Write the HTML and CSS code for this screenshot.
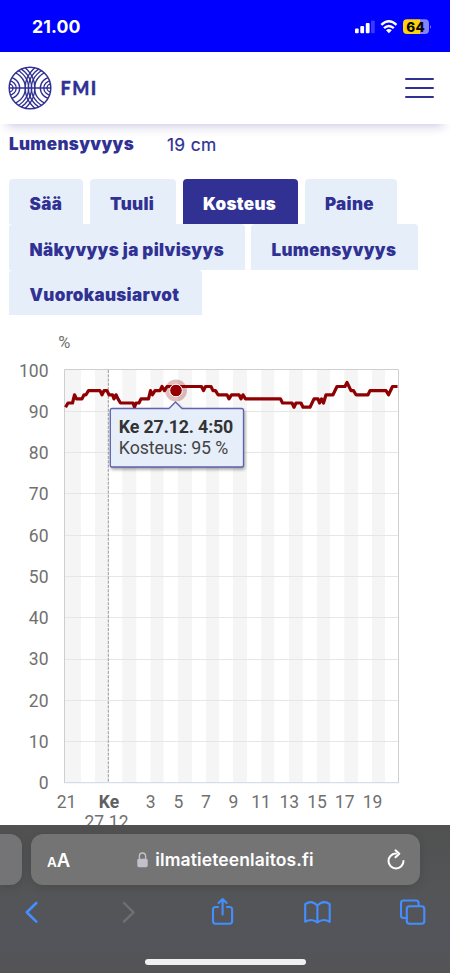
FILE: index.html
```html
<!DOCTYPE html>
<html lang="fi">
<head>
<meta charset="utf-8">
<meta name="viewport" content="width=device-width, initial-scale=1">
<title>Ilmatieteen laitos</title>
<link rel="stylesheet" href="styles.css">
</head>
<body>
<div class="phone">
  <div class="status">
    <span class="clock">21.00</span>
    <svg class="status-icons" width="76" height="18" viewBox="354 18 76 18">
      <g fill="#fff"><rect x="355" y="28.5" width="3.7" height="4.7" rx="1"/><rect x="360.3" y="26" width="3.8" height="7.2" rx="1"/><rect x="365.8" y="23" width="3.8" height="10.2" rx="1"/><rect x="371" y="20.5" width="3.8" height="12.7" rx="1" opacity=".22"/></g>
      <g fill="none" stroke="#fff" stroke-width="2.4"><path d="M381.3 24.8Q388.9 17.8 396.5 24.8"/><path d="M384 28.2Q388.9 23.8 393.8 28.2"/></g>
      <path d="M386 30.3Q388.9 27.8 391.8 30.3L388.9 33.3Z" fill="#fff"/>
      <path d="M407 19.3H420V34H407a4 4 0 0 1-4-4V23.3a4 4 0 0 1 4-4Z" fill="#ffd20a"/>
      <path d="M420 19.3h5a4 4 0 0 1 4 4V30a4 4 0 0 1-4 4h-5Z" fill="#8583fb"/>
      <path d="M430 24.7q1.8 2 0 4.2Z" fill="#8583fb"/>
      <text x="406.2" y="31.7" class="battery" textLength="18.5">64</text>
    </svg>
  </div>
  <header class="header">
    <a class="brand">
      <svg width="44" height="44" viewBox="0 0 44 44">
        <defs><clipPath id="disc"><circle cx="22" cy="22" r="21"/></clipPath></defs>
        <g fill="none" stroke="#303193" stroke-width="1.35">
          <g clip-path="url(#disc)">
            <circle cx="1" cy="22" r="4"/><circle cx="1" cy="22" r="7.2"/><circle cx="1" cy="22" r="10.7"/><circle cx="1" cy="22" r="16.4"/><circle cx="1" cy="22" r="19.6"/><circle cx="1" cy="22" r="22.6"/><circle cx="1" cy="22" r="25.8"/>
            <circle cx="43" cy="22" r="4"/><circle cx="43" cy="22" r="7.2"/><circle cx="43" cy="22" r="10.7"/><circle cx="43" cy="22" r="16.4"/><circle cx="43" cy="22" r="19.6"/><circle cx="43" cy="22" r="22.6"/><circle cx="43" cy="22" r="25.8"/>
            <path d="M1 22H43"/>
          </g>
          <circle cx="22" cy="22" r="20.8" stroke-width="1.5"/>
        </g>
      </svg>
      <span class="brand-name">FMI</span>
    </a>
    <div class="burger"><i></i><i></i><i></i></div>
  </header>
  <main class="content">
    <div class="reading"><b>Lumensyvyys</b><span>19 cm</span></div>
    <nav class="tabs">
      <a class="tab t-saa">Sää</a><a class="tab t-tuuli">Tuuli</a><a class="tab t-kosteus active">Kosteus</a><a class="tab t-paine">Paine</a>
      <a class="tab t-nakyvyys">Näkyvyys ja pilvisyys</a><a class="tab t-lumi">Lumensyvyys</a>
      <a class="tab t-vuorokausi">Vuorokausiarvot</a>
    </nav>
    <svg class="chart" width="450" height="509" viewBox="0 316 450 509">
      <path class="stripes" d="M65 370h16v412.500h-16zM95 370h14v412.500h-14zM122.300 370h14v412.500h-14zM150.500 370h13v412.500h-13zM178 370h14v412.500h-14zM206 370h13v412.500h-13zM233 370h14v412.500h-14zM261.300 370h13v412.500h-13zM289 370h13.700v412.500h-13.700zM317 370h13v412.500h-13zM344.300 370h13.700v412.500h-13.700zM372 370h13v412.500h-13z"/>
      <path class="grid" d="M65 411.500H398M65 452.500H398M65 493.500H398M65 535.500H398M65 576.500H398M65 617.500H398M65 659.500H398M65 700.500H398M65 741.500H398"/>
      <path class="frame" d="M64.500 783V369.500H398.500V783"/>
      <path class="base" d="M64 782.700H399"/>
      <path class="midnight" d="M108.300 370V782"/>
      <g class="axis y-axis">
        <text x="48.500" y="376.600">100</text><text x="48.500" y="417.600">90</text><text x="48.500" y="458.900">80</text><text x="48.500" y="500.200">70</text><text x="48.500" y="541.600">60</text><text x="48.500" y="582.800">50</text><text x="48.500" y="624.100">40</text><text x="48.500" y="665.400">30</text><text x="48.500" y="706.600">20</text><text x="48.500" y="748">10</text><text x="48.500" y="789">0</text>
      </g>
      <text class="unit" x="64.300" y="347.500">%</text>
      <g class="axis x-axis">
        <text x="66.500" y="807.600">21</text><text x="109" y="807.600" class="day">Ke</text><text x="106.500" y="827.800">27.12</text><text x="150.700" y="807.600">3</text><text x="178.500" y="807.600">5</text><text x="206" y="807.600">7</text><text x="233.500" y="807.600">9</text><text x="261" y="807.600">11</text><text x="289.300" y="807.600">13</text><text x="317" y="807.600">15</text><text x="344.700" y="807.600">17</text><text x="372.500" y="807.600">19</text>
      </g>
      <polyline class="series" id="series" points="65.5,407.2 68,403 72.5,403 74.5,394.800 76.500,398.900 82,398.900 84,394.800 86,394.800 88.500,390.600 100,390.600 102,394.800 104,390.600 107,390.600 109,394.800 112.500,394.800 114,398.900 116,394.800 118,398.900 120.500,403 133,403 134.500,407.200 136,403 139,403 141,398.900 148.500,398.900 150.500,390.600 152.500,394.800 155,390.600 160,390.600 162,386.500 164.500,390.600 167,386.500 201.500,386.500 203.500,390.600 205.500,386.500 211,386.500 213,390.600 215.500,390.600 218,394.800 227,394.800 229,398.900 231.500,394.800 239,394.800 241,398.900 243,394.800 245.500,398.900 280.500,398.900 282.500,403 292,403 294,407.200 296,403 301,403 303,407.200 310,407.200 314,398.900 318,398.900 319.500,403 321.500,398.900 323.500,403 326,394.800 333,394.800 337,386.500 345,386.500 347,382.400 351,390.600 353.500,390.600 356,394.800 368,394.800 370,390.600 386,390.600 388.500,394.800 392.500,386.500 397.500,386.500"/>
      <circle cx="176" cy="390.500" r="11" fill="#8b0000" opacity=".25"/>
      <circle cx="176" cy="390.500" r="6.300" fill="#960003" stroke="#fff" stroke-width="1"/>
      <path class="tip" d="M112 408.500H169L175.500 402L182 408.500H241.500Q243.500 408.500 243.500 410.500V465Q243.500 467 241.500 467H112Q110.300 467 110.300 465V410.500Q110.300 408.500 112 408.500Z"/>
      <text class="tip-title" x="118.800" y="432.700" textLength="114.500">Ke 27.12. 4:50</text>
      <text class="tip-value" x="118.800" y="453.600" textLength="109.500">Kosteus: 95 %</text>
    </svg>
  </main>
  <footer class="browser">
    <div class="address-row">
      <div class="previous-tab"></div>
      <div class="address">
        <span class="aa"><small>A</small>A</span>
        <span class="host">
          <svg width="11" height="16" viewBox="0 0 11 16"><rect x=".3" y="6.700" width="10.400" height="8.500" rx="1.600" fill="#c2c1cb"/><path d="M2.400 7V4.300a3.100 3.300 0 0 1 6.200 0V7" fill="none" stroke="#c2c1cb" stroke-width="1.400"/></svg>
          <span>ilmatieteenlaitos.fi</span>
        </span>
        <svg class="reload" width="20" height="22" viewBox="0 0 20 22" fill="none" stroke="#fff" stroke-width="2" stroke-linecap="round"><path d="M10 4.500A7.500 7.500 0 1 0 17.500 12"/><path d="M9.500 1.300L13.300 4.700L9.500 8.300" stroke-linejoin="round"/></svg>
      </div>
    </div>
    <svg class="toolbar" width="450" height="48" viewBox="0 889 450 48" fill="none" stroke="#448eff" stroke-width="2.100" stroke-linejoin="round" stroke-linecap="round">
      <path d="M36.300 903L26.800 912.300L36.300 921.600" stroke-width="2.600"/>
      <path d="M124 903L133.500 912.300L124 921.600" stroke="#707073" stroke-width="2.400"/>
      <path d="M218 907H215.500Q213 907 213 909.500V921Q213 923.700 215.500 923.700H229.500Q232.100 923.700 232.100 921V909.500Q232.100 907 229.500 907H227M222.600 914.500V899.500M218.600 903L222.600 899L226.600 903"/>
      <path d="M317.400 905.500Q311.500 899.300 305.200 904.200V921.800Q311.500 917.800 317.400 922.500Q323.400 917.800 329.700 921.800V904.200Q323.400 899.300 317.400 905.500V922"/>
      <rect x="406.800" y="906.200" width="17.500" height="17.500" rx="2.700"/><path d="M406.800 918H403.600Q401 918 401 915.500V903Q401 900.500 403.600 900.500H416Q418.600 900.500 418.600 903V906"/>
    </svg>
    <div class="home"></div>
  </footer>
</div>
</body>
</html>
```
FILE: styles.css
```css
* { box-sizing: border-box; }
body { margin: 0; background: #fff; font-family: Inter, sans-serif; color: #303193; }
.phone { width: 450px; height: 973px; display: flex; flex-direction: column; overflow: hidden; }
.status { height: 52px; flex: none; background: #0000fe; display: flex; align-items: flex-start; justify-content: space-between; padding: 18px 20px 0 32px; }
.clock { color: #fff; font-size: 17.7px; line-height: 18px; font-weight: 700; letter-spacing: .1px; }
.status-icons { overflow: visible; }
.battery { font: 800 13.5px Inter, sans-serif; fill: #080800; }
.header { height: 72px; flex: none; display: flex; align-items: center; justify-content: space-between; padding: 0 16px 0 8px; box-shadow: 0 9px 10px -7px #30319345; background: #fff; }
.brand { display: flex; align-items: center; gap: 8.5px; }
.brand-name { font: 900 18px/22px Lato, sans-serif; letter-spacing: 1.5px; -webkit-text-stroke: .3px; }
.burger { width: 29px; display: flex; flex-direction: column; gap: 6.7px; }
.burger i { height: 2px; border-radius: 1px; background: #303193; }
.content { height: 701px; flex: none; }
.reading { height: 54px; padding: 10px 9px 0; display: flex; font-size: 17px; line-height: 21px; }
.reading b { width: 158px; font-weight: 900; letter-spacing: .35px; }
.reading span { font-size: 17.4px; letter-spacing: .3px; -webkit-text-stroke: .2px; }
.tabs { height: 138px; padding: .5px 9px 0; display: flex; flex-wrap: wrap; align-content: flex-start; column-gap: 6.5px; }
.tab { height: 45.6px; flex: none; display: flex; align-items: center; justify-content: flex-start; padding: 5.500px 0 0 20.500px; background: #e6eefa; border-radius: 4px 4px 0 0; font-size: 17px; font-weight: 900; letter-spacing: .33px; white-space: nowrap; }
.tab.active { background: #303193; color: #fff; }
.t-saa { width: 74px; }
.t-tuuli { width: 86.5px; }
.t-kosteus { width: 115.5px; }
.t-paine { width: 92px; }
.t-nakyvyys { width: 235.5px; }
.t-lumi { width: 167px; }
.t-vuorokausi { width: 193px; }
.chart { display: block; }
.stripes { fill: #f5f5f5; }
.grid { stroke: #e6e6e6; }
.frame { fill: none; stroke: #cfcfcf; }
.base { stroke: #ccd6eb; }
.midnight { stroke: #999; stroke-dasharray: 3 1.3; }
.axis, .unit { font: 17.5px Roboto, sans-serif; fill: #707070; }
.y-axis { text-anchor: end; }
.x-axis, .unit { text-anchor: middle; }
.unit { font-size: 16.5px; }
.day { font-weight: 700; fill: #606060; }
.series { fill: none; stroke: #8f0002; stroke-width: 3.2; stroke-linejoin: round; }
.tip { fill: #e6eefa; stroke: #5f62af; stroke-width: 1.3; filter: drop-shadow(1px 2px 1.5px #0005); }
.tip-title { font: 700 17.800px Roboto, sans-serif; fill: #333; }
.tip-value { font: 17.800px Roboto, sans-serif; fill: #444; }
.browser { height: 148px; flex: none; background: linear-gradient(#515151, #535557 45%, #53555b 75%, #545456); }
.address-row { height: 64px; padding-top: 9px; display: flex; gap: 9px; }
.previous-tab { width: 22px; height: 51px; flex: none; border-radius: 0 12px 12px 0; background: #747476; box-shadow: 0 2px 10px #0002; }
.address { width: 389px; height: 51px; flex: none; border-radius: 12px; background: #747474; color: #fff; display: flex; align-items: center; justify-content: space-between; padding: 0 14px 0 16px; box-shadow: 0 2px 10px #0002; }
.aa { width: 50px; font-size: 18.5px; font-weight: 600; }
.aa small { font-size: 13.5px; }
.host { display: flex; align-items: center; gap: 7px; font-size: 17.5px; font-weight: 600; letter-spacing: .12px; line-height: 22px; white-space: nowrap; }
.reload { margin-left: 32px; }
.toolbar { display: block; }
.home { width: 161px; height: 6px; margin: 22px 0 0 144.500px; border-radius: 3px; background: #f0f0f0; }
```
